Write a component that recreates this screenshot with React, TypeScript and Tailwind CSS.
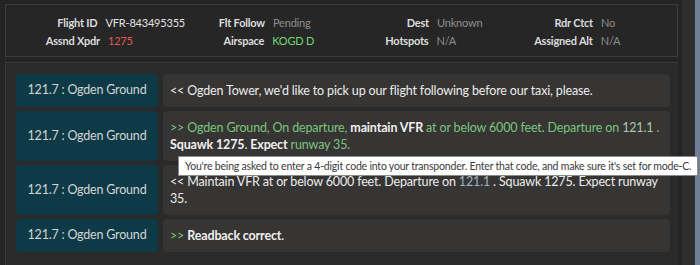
import React from "react";

const G = "text-[#7cc47c]";
const B = "font-bold text-[#f0f0f0]";

function Row({ children }: { children: React.ReactNode }) {
  return (
    <div className="flex gap-[5px]">
      <div className="w-[142px] shrink-0 rounded-[4px] bg-[#0d3a46] flex items-center justify-center text-[#d4d4d4] text-[12.5px] tracking-[-0.2px]">
        121.7 : Ogden Ground
      </div>
      <div className="flex-1 rounded-[4px] bg-[#363534] pl-[7px] pr-[4px] py-[8px] text-[12.5px] tracking-[-0.15px] leading-[17px] text-[#ececec]">
        {children}
      </div>
    </div>
  );
}

function Pair({ label, value, cls }: { label: string; value: string; cls: string }) {
  return (
    <div className="flex gap-[8px] w-[165px] whitespace-nowrap">
      <div className="w-[80px] text-right font-bold text-[#dcdcdc]">{label}</div>
      <div className={cls}>{value}</div>
    </div>
  );
}

export default function App() {
  return (
    <div
      className="relative w-[700px] h-[265px] bg-[#242424] flex overflow-hidden"
      style={{ fontFamily: 'Lato, "Open Sans", sans-serif' }}
    >
      <div className="w-[682px] pl-[5px] pt-[4px] pr-[4px] flex flex-col gap-[5px]">
        <div className="border border-[#3c3c3c] bg-[#262626] pl-[14px] pt-[9px] pb-[6px] text-[11px] tracking-[-0.2px] leading-[18px]">
          <div className="flex">
            <Pair label="Flight ID" value="VFR-843495355" cls="text-[#e2e2e2]" />
            <Pair label="Flt Follow" value="Pending" cls="text-[#8e8e8e]" />
            <Pair label="Dest" value="Unknown" cls="text-[#8e8e8e]" />
            <Pair label="Rdr Ctct" value="No" cls="text-[#8e8e8e]" />
          </div>
          <div className="flex">
            <Pair label="Assnd Xpdr" value="1275" cls="text-[#e35a5a]" />
            <Pair label="Airspace" value="KOGD D" cls="text-[#72d672]" />
            <Pair label="Hotspots" value="N/A" cls="text-[#8e8e8e]" />
            <Pair label="Assigned Alt" value="N/A" cls="text-[#8e8e8e]" />
          </div>
        </div>
        <div className="flex-1 border-l border-t border-[#3c3c3c] bg-[#2a2a2a] pl-[10px] pr-[8px] pt-[11px] flex flex-col gap-[4px]">
          <Row>&lt;&lt; Ogden Tower, we'd like to pick up our flight following before our taxi, please.</Row>
          <Row>
            <span className={G}>&gt;&gt; Ogden Ground, On departure, </span>
            <span className={B}>maintain VFR</span>
            <span className={G}> at or below 6000 feet. Departure on </span>
            <span className="whitespace-nowrap">
              <span className="text-[#a9c8a9]">121.1</span>
              <span className={G}> .</span>
            </span>{" "}
            <span className={B}>Squawk 1275</span>. <span className={B}>Expect</span>
            <span className={G}> runway 35.</span>
          </Row>
          <Row>
            &lt;&lt; Maintain VFR at or below 6000 feet. Departure on <span className="text-[#9fb4c6]">121.1</span> . Squawk 1275. Expect runway 35.
          </Row>
          <Row>
            <span className={G}>&gt;&gt; </span>
            <span className={B}>Readback correct</span>.
          </Row>
        </div>
      </div>
      <div className="w-[13px] bg-[#2e2e2e]" />
      <div className="w-[5px] bg-[#6f8096]" />
      <div className="absolute left-[178px] top-[156px] bg-white border border-[#8a8a8a] px-[6px] py-[1px] text-[10.5px] tracking-[-0.2px] leading-[16px] text-[#3a3a3a] whitespace-nowrap">
        You're being asked to enter a 4-digit code into your transponder. Enter that code, and make sure it's set for mode-C.
      </div>
    </div>
  );
}
